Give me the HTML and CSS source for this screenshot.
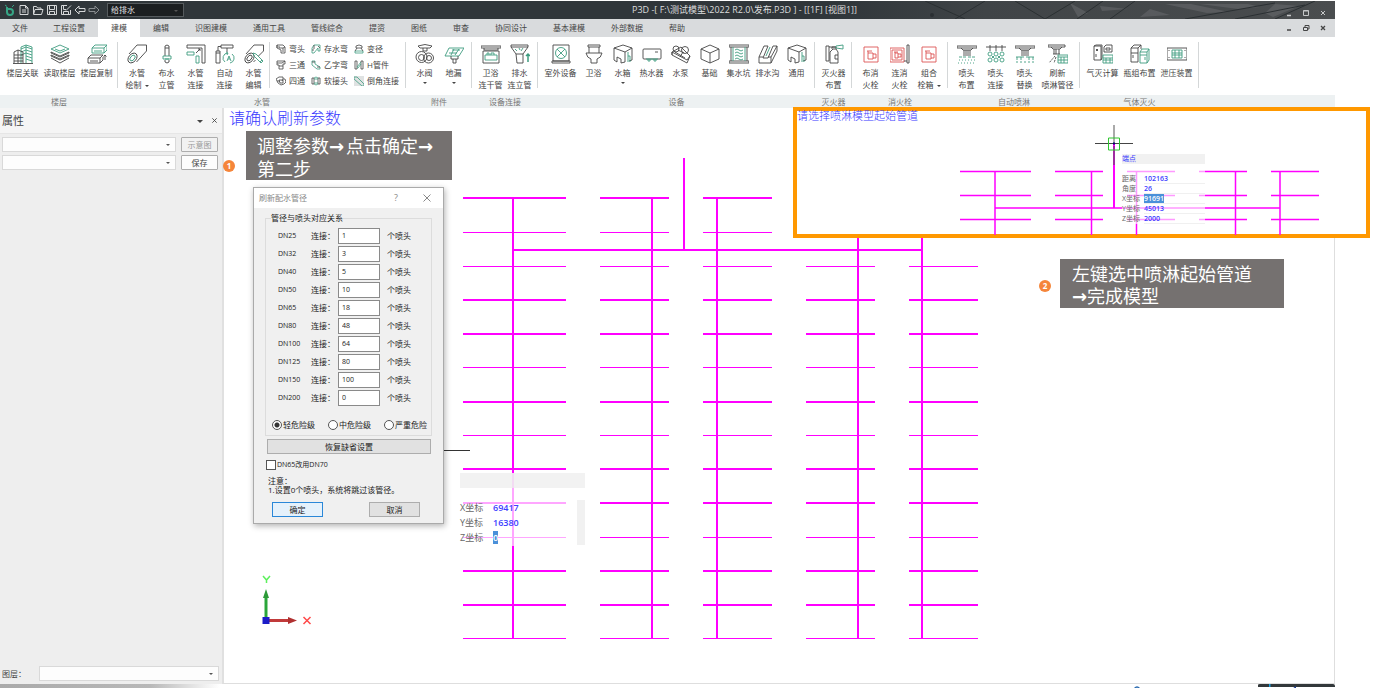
FILE: index.html
```html
<!DOCTYPE html>
<html lang="zh-CN">
<head>
<meta charset="utf-8">
<title>P3D</title>
<link rel="stylesheet" href="styles.css">
</head>
<body>
<div class="app">
  <header class="titlebar">
    <svg class="texture" viewBox="0 0 500 18" preserveAspectRatio="none"><defs><linearGradient id="tx"><stop offset="0" stop-color="#30363a"/><stop offset=".3" stop-color="#404447"/><stop offset="1" stop-color="#4a4d4f"/></linearGradient></defs><rect width="500" height="18" fill="url(#tx)"/><g fill="#65686a" opacity=".6"><path d="M235 2l18 10-10 4zM265 5l28 3-26 2zM315 8l20 6-30 2zM330 3l42 9 22-1-38-8zM365 3l48 0 12 3-22 2zM440 3l24 2-26 11-8-4z"/></g><g stroke="#2b3033" fill="none"><path d="M90 0l40 18M150 0l-30 18M180 0l30 18M242 18L268 0M275 18L300 0M400 18L470 4M440 18l40-18M210 18l30-18M350 18l90-16"/></g><circle cx="97" cy="14" r="2" fill="#2b3033"/></svg>
    <nav class="quick" aria-label="快速访问">
      <button aria-label="主页"><svg viewBox="0 0 12 12"><path d="M3 3v5a3 3 0 1 0 3-3H3" fill="none" stroke="#36a585" stroke-width="2"/><path d="M1 1l2 1.500M8 3l2-2" stroke="#36a585"/></svg></button>
      <button aria-label="新建"><svg viewBox="0 0 12 12"><path d="M2 1.500h5.500L10 4v6.500H2zM7.500 1.500V4H10M4 6h4M4 8h4"/></svg></button>
      <button aria-label="打开"><svg viewBox="0 0 12 12"><path d="M1.500 10V2.500h3l1 1.500H9v1.500M1.500 10.500L3 5.500h8l-1.500 5z"/></svg></button>
      <button aria-label="保存文件"><svg viewBox="0 0 12 12"><path d="M1.500 1.500h9v9h-9zM3.500 1.500v4h5v-4M3.500 10.500v-3h5v3"/></svg></button>
      <button aria-label="另存为"><svg viewBox="0 0 12 12"><path d="M10.500 6v4.500h-9v-9H7M3.500 1.500v4H6M3.500 10.500v-3h5v3M6 6.500l5-5"/></svg></button>
      <button aria-label="撤销"><svg viewBox="0 0 12 12"><path d="M1 6l4-4v2.500h6v3H5V10z"/></svg></button>
      <button aria-label="重做"><svg viewBox="0 0 12 12" opacity=".55"><path d="M11 6L7 2v2.500H1v3h6V10z"/></svg></button>
    </nav>
    <span class="pick dark"><select aria-label="专业"><option>给排水</option></select></span>
    <h1>P3D -[ F:\测试模型\2022 R2.0\发布.P3D ] - [[1F] [视图1]]</h1>
    <div class="winbtns light">
      <button aria-label="最小化"><svg viewBox="0 0 8 8"><path d="M2 6.500h4" stroke-width="1.500"/></svg></button>
      <button aria-label="最大化"><svg viewBox="0 0 8 8"><path d="M1.500 1.500h5v5h-5zM1.500 2h5"/></svg></button>
      <button aria-label="关闭"><svg viewBox="0 0 8 8"><path d="M2 2l4 4M6 2L2 6"/></svg></button>
    </div>
  </header>

  <div class="menubar">
    <nav class="menus">
      <button>文件</button><button>工程设置</button><button class="active">建模</button><button>编辑</button><button>识图建模</button><button>通用工具</button><button>管线综合</button><button>提资</button><button>图纸</button><button>审查</button><button>协同设计</button><button>基本建模</button><button>外部数据</button><button>帮助</button>
    </nav>
    <div class="winbtns">
      <button aria-label="最小化视图"><svg viewBox="0 0 8 8"><path d="M2 6h4" stroke-width="1.500"/></svg></button>
      <button aria-label="还原视图"><svg viewBox="0 0 8 8"><path d="M1.500 3.500h4v3h-4zM3 3V1.500h4v3.500H6"/></svg></button>
      <button aria-label="关闭视图"><svg viewBox="0 0 8 8"><path d="M2 2l4 4M6 2L2 6" stroke-width="1.300"/></svg></button>
    </div>
  </div>

  <div class="ribbon">
    <section class="group"><div class="tools">
      <button class="tool wide"><svg viewBox="0 0 20 20"><g class="g"><path d="M8 19V3l5-2 6 2v16M13 1v18M8 5l5-2 6 2M8 8l5-2 6 2M13 9l6 2M13 12l6 2M13 15l6 2M8 11l5-2"/></g><path d="M1 19V8l4-2 5 2v11M5 6v13M1 11h9M1 14h9M1 17h9M0 19.500h20"/></svg><span>楼层关联</span></button>
      <button class="tool wide"><svg viewBox="0 0 20 20"><path class="g" d="M10 1l9 4-9 4-9-4zM5 5l5 2 5-2"/><path d="M1 8l9 4 9-4M1 11l9 4 9-4M1 14l9 5 9-5M1 8v1l9 4 9-4V8M1 11v1l9 4 9-4v-1"/></svg><span>读取楼层</span></button>
      <button class="tool wide"><svg viewBox="0 0 20 20"><path class="g" d="M5 4l3-3h12l-3 3zM5 4v5h12V4M17 9l3-3V1M7 7h8"/><path d="M1 14l3-3h12l-3 3zM1 14v5h12v-5M13 19l3-3v-3M3 17h8M18 16v-5M16.500 12.500L18 11l1.500 1.500"/></svg><span>楼层复制</span></button>
    </div><footer>楼层</footer></section>

    <section class="group pipes"><div class="tools">
      <button class="tool mid"><svg viewBox="0 0 20 20"><ellipse cx="5.500" cy="14" rx="3.800" ry="5.500" transform="rotate(40 5.500 14)"/><path d="M2 10L10 1h9.500v6L9.500 18"/><ellipse class="g" cx="5.500" cy="14" rx="2" ry="3.300" transform="rotate(40 5.500 14)"/></svg><span>水管<br>绘制<i class="caret"></i></span></button>
      <button class="tool"><svg viewBox="0 0 20 20"><path d="M8 12V2q2-2 4 0v10M8 16v2q2 2 4 0v-2M8 4h4"/><path class="g" d="M6 12h8v3H6zM8 15h4"/></svg><span>布水<br>立管</span></button>
      <button class="tool"><svg viewBox="0 0 20 20"><path d="M1 1h18v18h-3V4H1zM10 9l4-4M12 5h2v2"/><path class="g" d="M1 8h7v3H1zM10 12h3v7h-3z"/></svg><span>水管<br>连接</span></button>
      <button class="tool"><svg viewBox="0 0 20 20"><path d="M6 1h12v3H6zM1 7h4v12H1zM3 7V2.500h3M12 4v4M1 9h4"/><path class="g" d="M10 18a5 5 0 0 1 3-9M17 10a5 5 0 0 1-2 9M12 17l2-5 2 5M13 15h2M11 8l2 1-1 2"/></svg><span>自动<br>连接</span></button>
      <button class="tool"><svg viewBox="0 0 20 20"><ellipse cx="5.500" cy="14" rx="3.800" ry="5.500" transform="rotate(40 5.500 14)"/><ellipse cx="5.500" cy="14" rx="2" ry="3.300" transform="rotate(40 5.500 14)"/><path d="M2 10L10 1h9.500v6l-5 5M9.500 18l2-2"/><path class="g" d="M9 9l3 1 7 7-2 2-7-7zM16 18l2-2"/></svg><span>水管<br>编辑</span></button>
      <div class="small">
        <button><svg viewBox="0 0 10 10"><path d="M1 1h6l2 2v6H5V6L1 4zM1 1v3M3 2v2h4v4M7 4l2-1"/></svg>弯头</button>
        <button><svg viewBox="0 0 10 10"><path class="g" d="M1 9V4l2-3h6v6H7V4L3 9z"/><path d="M3 1v4M1 6h2M7 2l2 2"/></svg>存水弯</button>
        <button><svg viewBox="0 0 10 10"><path class="g" d="M1 7h8v2H1z"/><path d="M2 2q3-2 6 0v2H2zM3 4L1 7M7 4l2 3"/></svg>变径</button>
        <button><svg viewBox="0 0 10 10"><path d="M1 1h8v3H7v5H3V5H1zM1 3h5l3-2M3 6h4"/></svg>三通</button>
        <button><svg viewBox="0 0 10 10"><path class="g" d="M1 1h3v3l5 3v2H6L1 5z"/><path d="M1 2h3M6 7h3"/></svg>乙字弯</button>
        <button><svg viewBox="0 0 10 10"><path d="M1 1h2v8H1zM7 1h2v8H7z"/><path class="g" d="M3 7l4-5M3 8h1l3-4"/></svg>H管件</button>
        <button><svg viewBox="0 0 10 10"><path d="M3 1h4v2h2l1 3-2 2-3 1-3-2-2-4 3-2zM3 4h4v3H4zM7 3L6 5M1 5h3"/></svg>四通</button>
        <button><svg viewBox="0 0 10 10"><path d="M1 2h2v6H1zM7 2h2v6H7z"/><path class="g" d="M3 2q2-2 4 0M3 8q2 2 4 0M3 3h4M3 7h4"/></svg>软接头</button>
        <button><svg viewBox="0 0 10 10"><path class="shade" d="M0 0h10v10H0z"/><path class="g" d="M0 1h3l7 7v2H8L0 3z"/></svg>倒角连接</button>
      </div>
    </div><footer>水管</footer></section>

    <section class="group"><div class="tools">
      <button class="tool"><svg viewBox="0 0 20 20"><path d="M3 2q7-3 14 0l-2 2H5zM8 4v3h4V4"/><circle cx="6.500" cy="13" r="5.500"/><circle cx="13.500" cy="14" r="5"/><circle cx="6.500" cy="13.500" r="3"/><circle cx="14" cy="14" r="2.500"/></svg><span>水阀<i class="caret below"></i></span></button>
      <button class="tool"><svg viewBox="0 0 20 20"><path class="g" d="M5 4h15l-5 8H1zM8 6h8M5 9h8M10 5l-3 6M15 5l-4 6"/><path d="M7 12v3h7v-3M9 15v4h3v-4"/></svg><span>地漏<i class="caret below"></i></span></button>
    </div><footer>附件</footer></section>

    <section class="group"><div class="tools">
      <button class="tool"><svg viewBox="0 0 20 20"><path d="M0 2h20v2H0zM3 4v2h14V4M2 7h16v12H2z"/><path class="g" d="M4 11h12v5H4zM6 11V9h2v2M10 11V9h3v2"/></svg><span>卫浴<br>连干管</span></button>
      <button class="tool"><svg viewBox="0 0 20 20"><path d="M1 1h17v2l-5 7v9H7l-1-9-5-7zM1 3h17M6 10h7"/><path class="g" d="M5 5l2 2M9 4l1 2M13 4l-2 3"/><path class="g bold" d="M18 18v-8M16 12l2-2 2 2"/></svg><span>排水<br>连立管</span></button>
    </div><footer>设备连接</footer></section>

    <section class="group"><div class="tools">
      <button class="tool wide"><svg viewBox="0 0 20 20"><path d="M2 1h16v16H2zM1 17h18v2H1z"/><g class="g"><circle cx="10" cy="9" r="5.500"/><path d="M6 5l8 8M14 5l-8 8"/></g></svg><span>室外设备</span></button>
      <button class="tool"><svg viewBox="0 0 20 20"><path d="M4 1h12v2H4zM5 3v6M15 3v6M2 9h16q-1 5-5 6v4H7v-4Q3 14 2 9z"/></svg><span>卫浴</span></button>
      <button class="tool"><svg viewBox="0 0 20 20"><path d="M1 4l9-3 9 3-7 4zM1 4v12l3 2v-5l4 2v4l4-1V8M19 4v12l-3 1"/><path class="g" d="M15 8v10M15 12h2v6"/></svg><span>水箱<i class="caret below"></i></span></button>
      <button class="tool"><svg viewBox="0 0 20 20"><rect x="1" y="5" width="18" height="10" rx="1"/><path d="M13 8h3"/><path class="g" d="M4 15h12M6 15v2h2v-2M12 15v2h2v-2"/></svg><span>热水器</span></button>
      <button class="tool"><svg viewBox="0 0 20 20"><circle cx="5" cy="5" r="3"/><circle cx="14" cy="6" r="3.500"/><path d="M1 8l9-5 9 9-3 7L1 11zM1 11v-3l15 8 3-4M7 6l6 3M4 8l10 6M9 13l3-5"/></svg><span>水泵</span></button>
      <button class="tool"><svg viewBox="0 0 20 20"><path d="M1 5l9-4 9 4v10l-9 4-9-4zM1 5l9 4 9-4M10 9v10"/></svg><span>基础</span></button>
      <button class="tool"><svg viewBox="0 0 20 20"><path d="M0 1h20v2H0zM0 17h20v2H0zM2 3v14M18 3v14"/><path class="g" d="M4 3v14M16 3v14M6 6q2-2 4 0t4 0M6 9q2-2 4 0t4 0M6 12q2-2 4 0t4 0M6 15q2-2 4 0t4 0"/></svg><span>集水坑</span></button>
      <button class="tool"><svg viewBox="0 0 20 20"><path d="M1 13L6 2h4L5 14h5l5-12h4v5l-6 12H1zM1 13h4M10 13h3v6M13 13l6-11"/><path class="g" d="M8 12l4-9"/></svg><span>排水沟</span></button>
      <button class="tool"><svg viewBox="0 0 20 20"><path d="M1 4l9-3 9 3-7 4zM1 4v12l3 2v-5l4 2v4l4-1V8M19 4v12l-3 1"/><path class="g" d="M15 8v10M15 12h2v6"/></svg><span>通用</span></button>
    </div><footer>设备</footer></section>

    <section class="group"><div class="tools">
      <button class="tool"><svg viewBox="0 0 20 20"><path d="M2 17V2h3v15zM5 3h7M6 19V8l3-3h3l2 3v11zM8 5V3h4v2M14 11h-3v4h3"/><path class="g" d="M12 2l7-1v4l-7-1z"/></svg><span>灭火器<br>布置</span></button>
    </div><footer>灭火器</footer></section>

    <section class="group"><div class="tools">
      <button class="tool red"><svg viewBox="0 0 20 20"><path d="M3 3h14v15H3zM6 7h5M7 7v8h5V9H7M12 10h3v4h-3"/></svg><span>布消<br>火栓</span></button>
      <button class="tool red"><svg viewBox="0 0 20 20"><path d="M0 4h14v14H0zM2 6h10v10H2zM4 8h4M5 8v6h3v-5H5M8 10h3v3H8"/><path class="k" d="M17 1h2v18h-2zM14 17h3"/></svg><span>连消<br>火栓</span></button>
      <button class="tool mid red"><svg viewBox="0 0 20 20"><path d="M3 3h14v15H3zM6 7h5M7 7v8h5V9H7M12 10h3v4h-3"/></svg><span>组合<br>栓箱<i class="caret"></i></span></button>
    </div><footer>消火栓</footer></section>

    <section class="group"><div class="tools">
      <button class="tool"><svg viewBox="0 0 20 20"><path d="M0 2h20v2H0zM4 4l2 2h8l2-2M7 6v6M9 6v6M11 6v6M13 6v6"/><path class="g" d="M2 13h3M6 13h3M11 13h3M15 13h3"/><path class="g" d="M2 16h16M1 19h18" stroke-dasharray="1 2"/></svg><span>喷头<br>布置</span></button>
      <button class="tool"><svg viewBox="0 0 20 20"><path d="M0 3h20M4 1v6M10 1v6M16 1v6"/><g class="g"><circle cx="4" cy="10" r="2"/><circle cx="10" cy="10" r="2"/><circle cx="16" cy="10" r="2"/><circle cx="4" cy="16" r="2"/><circle cx="10" cy="16" r="2"/><circle cx="16" cy="16" r="2"/><path d="M6 12l2 2M12 12l2 2M8 12l-2 2M14 12l-2 2"/></g></svg><span>喷头<br>连接</span></button>
      <button class="tool"><svg viewBox="0 0 20 20"><path d="M0 2h20v2H0zM4 4l2 2h8l2-2M7 6v6M9 6v6M11 6v6M13 6v6"/><path class="g" d="M1 13h8M11 13h8M2 13v3M6 13v3M14 13v3M18 13v3"/><path class="g" d="M1 18h18" stroke-dasharray="2 2"/></svg><span>喷头<br>替换</span></button>
      <button class="tool wide"><svg viewBox="0 0 20 20"><path d="M0 1h17v2H0zM3 3l2 2h7l2-2M6 5v5M8 5v5M11 5v5M5 10h7"/><path d="M7 12l-6 7M8 13l-2 6" stroke-dasharray="2 1"/><path class="g" d="M10 11h10v8H10zM10 13h10M10 16h10M13 13v6M16 13v6"/></svg><span>刷新<br>喷淋管径</span></button>
    </div><footer>自动喷淋</footer></section>

    <section class="group"><div class="tools">
      <button class="tool wide"><svg viewBox="0 0 20 20"><path d="M1 2h7v14H1zM1 2l2-1h6v13l-1 2M3 5l2 2M5 5L3 7M3 10v3M11 3l2-2h6v7h-8zM13 4h4v2h-4z"/><path class="g" d="M10 11h10v8H10zM10 14h10M10 16h10M13 14v5M17 14v5"/></svg><span>气灭计算</span></button>
      <button class="tool wide"><svg viewBox="0 0 20 20"><path d="M1 4l3-3h7v4M1 4h7v14H1zM8 4l3-3M1 9h7M3 11v3"/><path class="g" d="M10 8l2-3h7v11l-2 3h-7zM10 8h7v11M17 8l2-3M10 11h7M15 13v3"/></svg><span>瓶组布置</span></button>
      <button class="tool wide"><svg viewBox="0 0 20 20"><path d="M0 4h20v12H0zM2 6v1M18 6v1M2 13v1M18 13v1"/><path class="g" d="M5 6h10v8H5zM5 9h10M5 11h10M8 6v8M12 6v8"/></svg><span>泄压装置</span></button>
    </div><footer>气体灭火</footer></section>
  </div>

  <main class="work">
    <aside class="side">
      <div class="side-head"><h2>属性</h2><button aria-label="收起"><i class="caret big"></i></button><button aria-label="关闭面板"><svg viewBox="0 0 8 8"><path d="M1.500 1.500l5 5M6.500 1.500l-5 5"/></svg></button></div>
      <div class="side-row"><span class="pick"><select aria-label="类型"><option></option></select></span><button class="btn" disabled>示意图</button></div>
      <div class="side-row"><span class="pick"><select aria-label="方案"><option></option></select></span><button class="btn save">保存</button></div>
      <div class="layer"><label for="layer">图层：</label><span class="pick"><select id="layer"><option></option></select></span></div>
    </aside>

    <div class="canvas">
      <svg class="scene" width="1112" height="576" viewBox="223 108 1112 576">
        <defs><g id="row"><path d="M463 0h103M600 0h69M703 0h69M806 0h69M909 0h69"/></g></defs>
        <g stroke="#f0f" fill="none" stroke-width="2">
          <path d="M684 158v92M513 250h409"/>
          <path d="M513 198v440M652 198v440M717 198v440M858 198v440M922 198v440"/>
          <use href="#row" y="198"/><use href="#row" y="232.500" stroke-width="1"/><use href="#row" y="266.500" stroke-width="1"/><use href="#row" y="300"/><use href="#row" y="334"/><use href="#row" y="367.500" stroke-width="1"/><use href="#row" y="402"/><use href="#row" y="435.500" stroke-width="1"/><use href="#row" y="469"/><use href="#row" y="503"/><use href="#row" y="537.500" stroke-width="1"/><use href="#row" y="571"/><use href="#row" y="605"/><use href="#row" y="638.500" stroke-width="1"/>
        </g>
        <path d="M443 450.500h27" stroke="#333"/>
        <path d="M266 620v-24" stroke="#2aa63a" stroke-width="3"/><path d="M263 598l3-9 3 9z" fill="#2c9a38"/>
        <path d="M267 620.500h23" stroke="#c13a3a" stroke-width="3"/><path d="M288 617l9 3.500-9 3.500z" fill="#b03030"/>
        <path d="M262.500 617h7v7h-7z" fill="#1c1cc8"/>
        <path d="M263 576l3.500 4 3.500-4M266.500 580v3" stroke="#5df05d" stroke-width="1.500" fill="none"/>
        <path d="M303.500 617l7 7M310.500 617l-7 7" stroke="#ff4a4a" stroke-width="1.500"/>
      </svg>
      <p class="prompt">请确认刷新参数</p>

      <div class="coords">
        <div class="band"></div>
        <div class="rows">
          <label for="cx">X坐标</label><output id="cx">69417</output>
          <label for="cy">Y坐标</label><output id="cy">16380</output>
          <label for="cz">Z坐标</label><output id="cz"><mark>0</mark></output>
        </div>
      </div>

      <p class="note one">调整参数<b>→</b>点击确定<b>→</b><br>第二步</p>
      <span class="badge b1">1</span>

      <form class="dialog">
        <div class="dlg-title"><h3>刷新配水管径</h3><button type="button" aria-label="帮助信息">?</button><button type="button" aria-label="关闭对话框"><svg viewBox="0 0 8 8"><path d="M.5.5l7 7M7.500.5l-7 7"/></svg></button></div>
        <div class="dlg-body">
          <fieldset><legend>管径与喷头对应关系</legend>
            <div class="fields">
              <span>DN25</span><label for="d1">连接：</label><input id="d1" value="1"><span>个喷头</span>
              <span>DN32</span><label for="d2">连接：</label><input id="d2" value="3"><span>个喷头</span>
              <span>DN40</span><label for="d3">连接：</label><input id="d3" value="5"><span>个喷头</span>
              <span>DN50</span><label for="d4">连接：</label><input id="d4" value="10"><span>个喷头</span>
              <span>DN65</span><label for="d5">连接：</label><input id="d5" value="18"><span>个喷头</span>
              <span>DN80</span><label for="d6">连接：</label><input id="d6" value="48"><span>个喷头</span>
              <span>DN100</span><label for="d7">连接：</label><input id="d7" value="64"><span>个喷头</span>
              <span>DN125</span><label for="d8">连接：</label><input id="d8" value="80"><span>个喷头</span>
              <span>DN150</span><label for="d9">连接：</label><input id="d9" value="100"><span>个喷头</span>
              <span>DN200</span><label for="d10">连接：</label><input id="d10" value="0"><span>个喷头</span>
            </div>
            <div class="radios">
              <label><input type="radio" name="risk" checked>轻危险级</label><label><input type="radio" name="risk">中危险级</label><label><input type="radio" name="risk">严重危险</label>
            </div>
          </fieldset>
          <button type="button" class="plain">恢复缺省设置</button>
          <label class="check"><input type="checkbox">DN65改用DN70</label>
          <p class="hint">注意：<br>1.设置0个喷头，系统将跳过该管径。</p>
          <div class="actions"><button type="button" class="plain ok">确定</button><button type="button" class="plain">取消</button></div>
        </div>
      </form>

      <div class="inset">
        <svg class="scene" width="569" height="124" viewBox="797 111 569 124">
          <defs><g id="irow"><path d="M960 0h71M1055 0h48M1127 0h48M1199 0h48M1271 0h48"/></g></defs>
          <path d="M1114 125v19" stroke="#aaa" stroke-width="2"/>
          <g stroke="#f0f" fill="none" stroke-width="1.500"><use href="#irow" y="171.500"/><use href="#irow" y="195.500"/><use href="#irow" y="219.500"/><path d="M995 171v64M1091.500 171v64M1136.500 171v64M1235.500 171v64M1280 171v64M995 208h285"/><path d="M1114 144v64" stroke-width="2"/></g>
          <path d="M1114 146v19" stroke="#a02aa0" stroke-width="2"/>
          <path d="M1095 143.500h38" stroke="#444"/>
          <path d="M1108.500 138h11v12h-11z" fill="none" stroke="#2fc62f"/><path d="M1113 142.500h2v2h-2z" fill="#006"/>
        </svg>
        <p class="prompt">请选择喷淋模型起始管道</p>
        <div class="tip"><div class="band">端点</div>
          <div class="rows"><label for="t1">距离</label><output id="t1">102163</output><label for="t2">角度</label><output id="t2">26</output><label for="t3">X坐标</label><output id="t3"><mark>91691</mark></output><label for="t4">Y坐标</label><output id="t4">45013</output><label for="t5">Z坐标</label><output id="t5">2000</output></div>
        </div>
      </div>
      <p class="note two">左键选中喷淋起始管道<br><b>→</b>完成模型</p>
      <span class="badge b2">2</span>
    </div>
  </main>
  <div class="bottom"><svg viewBox="0 0 210 5"><path d="M133 5l0-4q0-1 2-1h73q2 0 2 2v1h-77z" fill="#33383a"/><path d="M144 0h1.500v3h-1.500z" fill="#1aa0e0"/><path d="M9 5q3-4 6 0" fill="none" stroke="#2a6ab0" stroke-width="1.300"/><path d="M167 5l4-3v3z" fill="#1a3a90"/></svg></div>
</div>
</body>
</html>
```
FILE: styles.css
```css
* { box-sizing: border-box; }
html, body { height: 100%; }
body {
  margin: 0;
  padding: 1px 43px 0 0;
  background: #fff;
  color: #444;
  font: 8px/12px "Open Sans", "Noto Sans CJK SC", sans-serif;
  overflow: hidden;
}
h1, h2, h3, p { margin: 0; font-weight: 400; }
button, input, select { font: inherit; color: inherit; margin: 0; padding: 0; border-radius: 0; }
button { background: none; border: 0; white-space: nowrap; }
svg { display: block; fill: none; stroke: #454545; stroke-width: 1; }
.app { display: flex; flex-direction: column; height: 100%; }

.caret {
  display: inline-block;
  border: 2px solid transparent;
  border-top-color: #444;
  border-bottom: 0;
  margin-left: 3px;
  vertical-align: middle;
}
.caret.big { border-width: 3px; border-bottom: 0; margin: 0; }
.caret.below { display: block; width: 0; margin: 3px auto 0; }

.titlebar {
  position: relative;
  display: flex;
  align-items: center;
  flex: none;
  height: 18px;
  background: #30363a;
  color: #ddd;
}
.texture { position: absolute; right: 0; top: 0; width: 500px; height: 18px; stroke: none; }
.titlebar > :not(.texture) { position: relative; }
.quick { display: flex; gap: 2px; padding: 0 7px 0 4px; }
.quick svg { width: 12px; height: 12px; stroke: #d5d7d8; }
.titlebar h1 { flex: 1; padding-left: 20px; text-align: center; font-size: 9px; line-height: 18px; color: #ddd; }

.pick { position: relative; display: block; border: 1px solid #d9d9d9; background: #fdfdfd; }
.pick select { display: block; width: 100%; height: 13px; border: 0; background: none; appearance: none; padding: 0 3px; }
.pick::after {
  content: "";
  position: absolute;
  right: 5px;
  top: 6px;
  border: 2px solid transparent;
  border-top-color: #555;
  border-bottom: 0;
}
.pick.dark { width: 77px; background: #1c1f21; border-color: #565b5e; color: #e3e3e3; }
.pick.dark select { height: 12px; }

.winbtns { display: flex; gap: 9px; padding-right: 8px; }
.winbtns svg { width: 8px; height: 8px; }
.winbtns.light { padding-top: 5px; }
.winbtns.light svg { stroke: #c5c7c8; }

.menubar { display: flex; flex: none; justify-content: space-between; align-items: stretch; height: 18px; background: #d9dbdd; }
.menus { display: flex; }
.menus button { padding: 0 13px; }
.menus button:first-child { padding: 0 12px; }
.menus .active { background: #fff; }

.ribbon {
  display: flex;
  flex: none;
  background: linear-gradient(#fff 58px, #edf1f2 58px);
}
.group { display: flex; flex-direction: column; }
.tools { position: relative; display: flex; height: 58px; padding: 7px 4px 0; }
.group:first-child .tools { padding-right: 3px; }
.tools::after, .small::before {
  content: "";
  position: absolute;
  right: 0;
  top: 5px;
  height: 46px;
  border-right: 1px solid #d4d7d8;
}
.group footer { height: 13px; line-height: 13px; text-align: center; color: #777; }
.tool { display: flex; flex-direction: column; align-items: center; gap: 3px; width: 29px; height: 48px; line-height: 12px; }
.tool.wide { width: 37px; }
.tool.mid { width: 30px; }
.tool svg { width: 20px; height: 20px; stroke-width: 0.9; }
.g { stroke: #3f9c80; }
.bold { stroke-width: 1.5; }
.shade { fill: #dfe2e2; stroke: none; }
.red svg { stroke: #dc5555; }
.red .k { stroke: #454545; }
.small {
  position: relative;
  display: grid;
  grid-template-columns: 35px 43px 48px;
  grid-auto-rows: 16px;
  margin: -3px 0 0 8px;
}
.small::before { right: auto; left: -7px; top: 1px; }
.small button { display: flex; align-items: center; gap: 3px; }
.small svg { width: 10px; height: 10px; stroke-width: 0.8; }

.work { display: flex; flex: 1; min-height: 0; }
.side { display: flex; flex-direction: column; gap: 3px; flex: none; width: 224px; background: #eee; border-right: 2px solid #e0e0e0; }
.side-head { display: flex; align-items: center; gap: 8px; height: 26px; padding: 0 4px 0 2px; background: #f5f5f5; border-bottom: 1px solid #e6e6e6; }
.side-head h2 { flex: 1; font-size: 11px; }
.side-head svg { width: 7px; height: 7px; }
.side-row { display: flex; gap: 5px; padding: 0 4px 0 2px; }
.side-row .pick { flex: 1; }
.btn { width: 37px; border: 1px solid #adadad; border-radius: 1px; background: #f2f2f2; }
.btn:disabled { color: #999; }
.btn.save { background: #fdfdfd; }
.layer { display: flex; align-items: center; gap: 13px; margin-top: auto; padding: 0 3px 3px 2px; }
.layer .pick { flex: 1; }

.canvas { position: relative; flex: 1; min-width: 0; margin-left: -1px; border: 1px solid #dedede; border-width: 0 1px 1px 0; }
.scene { position: absolute; left: 0; top: 0; stroke: none; }
.canvas > .prompt { position: absolute; left: 6px; top: 1px; color: #3a3aff; font: 300 16px/20px "Liberation Serif", "Noto Sans CJK SC", serif; }

.note { position: absolute; padding: 4px 12px 0; height: 49px; background: #757170; color: #fff; font-size: 18px; line-height: 22px; white-space: nowrap; }
.note b { font-family: "DejaVu Sans", sans-serif; }
.note.one { left: 23px; top: 23px; width: 206px; padding-left: 11px; }
.note.one b { padding-right: 2px; }
.note.two { left: 837px; top: 151px; width: 224px; }
.badge { position: absolute; width: 12px; height: 12px; border-radius: 50%; background: #f5853a; color: #fff; font-weight: 700; text-align: center; }
.b1 { left: 0; top: 52px; }
.b2 { left: 816px; top: 172px; }

.coords { position: absolute; left: 237px; top: 365px; width: 125px; height: 73px; background: rgba(255, 255, 255, 0.65); font-size: 9px; line-height: 15px; }
.coords .band { height: 15px; background: rgba(238, 238, 238, 0.75); }
.rows { display: grid; color: #666; }
.rows output { color: #3d3dff; font-weight: 600; }
.coords .rows { grid-template-columns: 33px 1fr; margin-top: 12px; border-right: 8px solid #f1f1f1; }
mark { background: #4a90d9; color: #fff; }

.dialog { position: absolute; left: 30px; top: 79px; width: 191px; border: 1px solid #aaa; background: #f0f0f0; color: #222; box-shadow: 1px 2px 6px rgba(0, 0, 0, 0.3); }
.dlg-title { display: flex; align-items: center; gap: 25px; height: 20px; padding: 0 12px 0 5px; background: #fff; color: #888; }
.dlg-title h3 { flex: 1; font-size: 8px; }
.dlg-title button { font-size: 9px; }
.dlg-title svg { width: 8px; height: 8px; stroke: #888; }
.dlg-body { display: flex; flex-direction: column; padding: 4px 11px 6px; }
fieldset { min-width: 0; margin: 0 0 3px; padding: 0 0 4px; border: 1px solid #dcdcdc; }
legend { padding: 0; margin-left: 5px; line-height: 12px; }
.fields { display: grid; grid-template-columns: 33px 27px 42px 1fr; grid-auto-rows: 16px; row-gap: 2px; align-items: center; padding: 4px 0 0 12px; }
.fields span:nth-child(4n + 1) { font-size: 7px; }
.fields span:nth-child(4n) { padding-left: 7px; }
.fields input { width: 42px; height: 16px; border: 1px solid #8a8a8a; background: #fff; padding: 0 3px 2px; font-size: 7px; outline: 0; }
.radios { display: flex; justify-content: space-between; padding: 13px 4px 0 6px; }
.radios label, .check { display: flex; align-items: center; gap: 1px; white-space: nowrap; }
.radios input, .check input { appearance: none; width: 10px; height: 10px; border: 1px solid #555; background: #fff; }
.radios input { border-radius: 50%; }
.radios input:checked { background: radial-gradient(#333 0 2px, #fff 3px); }
.plain { height: 15px; border: 1px solid #adadad; background: #e1e1e1; line-height: 12px; }
.dlg-body > .plain { margin: 0 1px 0 2px; }
.check { margin-top: 5px; font-size: 7px; }
.check input { margin-left: 1px; }
.hint { margin: 5px 0 0 3px; line-height: 9px; white-space: nowrap; }
.actions { display: flex; justify-content: space-between; padding: 8px 12px 0 7px; }
.actions .plain { width: 51px; }
.actions .ok { border-color: #2a87d8; background: #e5f1fb; }

.inset { position: absolute; left: 570px; top: -1px; width: 577px; height: 131px; border: 4px solid #ff9800; background: #fff; }
.inset .prompt { position: absolute; left: 0; top: -3px; color: #3a3aff; font: 300 11px/16px "Liberation Serif", "Noto Sans CJK SC", serif; white-space: nowrap; }
.tip { position: absolute; left: 325px; top: 43px; width: 83px; background: rgba(255, 255, 255, 0.6); font-size: 7px; line-height: 10px; }
.tip .band { height: 10px; background: rgba(238, 238, 238, 0.8); color: #3d3dff; }
.tip .rows { grid-template-columns: 22px 1fr; margin-top: 10px; line-height: 9px; }
.tip .rows output { border-bottom: 1px solid #f0f0f0; }

.bottom { display: flex; justify-content: flex-end; height: 4px; background: linear-gradient(90deg, #aaa, #b8b8b8 150px, #fff 220px); }
.bottom svg { width: 210px; height: 5px; stroke: none; }
```
